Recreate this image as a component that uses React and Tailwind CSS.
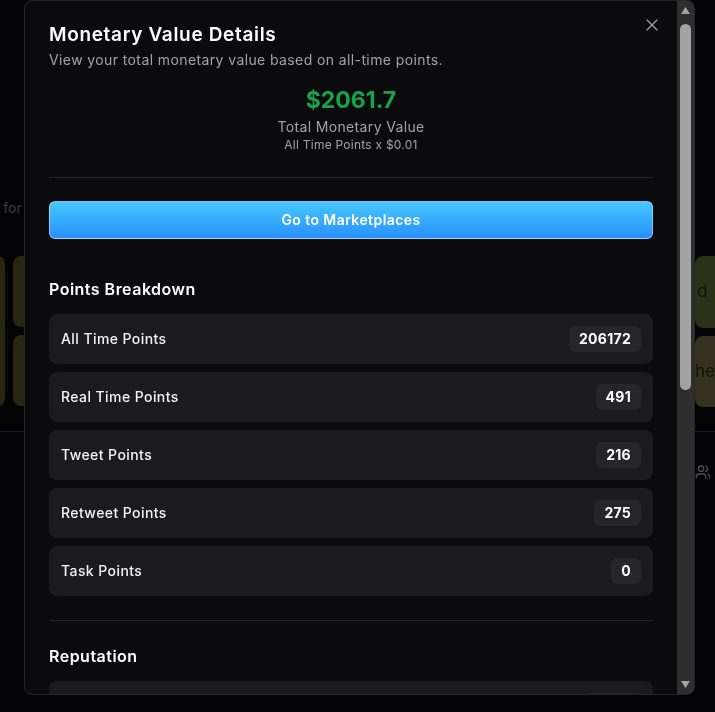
import React from "react";
import { X, Users } from "lucide-react";

const points = [
  { label: "All Time Points", value: "206172" },
  { label: "Real Time Points", value: "491" },
  { label: "Tweet Points", value: "216" },
  { label: "Retweet Points", value: "275" },
  { label: "Task Points", value: "0" },
];

const reputation = [
  { label: "Reputation Score", value: "1240" },
  { label: "Rank", value: "#812" },
];

const Row = ({ label, value }) => (
  <div className="flex h-[50px] items-center justify-between rounded-lg bg-[#1b1b1e] px-3">
    <span className="text-sm font-medium tracking-[0.03em] text-[#f4f4f5]">{label}</span>
    <span className="flex h-[26px] items-center rounded-md bg-[#262629] px-2.5 text-sm font-bold tracking-[0.02em] text-white">
      {value}
    </span>
  </div>
);

export default function App() {
  return (
    <div
      className="relative h-[712px] w-full overflow-hidden bg-[#030305]"
      style={{ fontFamily: "Inter, 'Noto Sans', sans-serif" }}
    >
      {/* page underneath the modal */}
      <div className="flex flex-col pt-[198px]">
        <div className="flex justify-between text-sm text-[#3a3d48]">
          <span className="-ml-2">s for</span>
          <span />
        </div>
        <div className="mt-[38px] flex justify-between">
          <div className="flex gap-2">
            <div className="-ml-3 h-[150px] w-[17px] rounded-r-lg bg-[#29260f]" />
            <div className="flex flex-col gap-2">
              <div className="h-[71px] w-3 rounded-l-lg bg-[#29260f]" />
              <div className="h-[71px] w-3 rounded-l-lg bg-[#29260f]" />
            </div>
          </div>
          <div className="flex w-[20px] flex-col gap-2">
            <div className="flex h-[72px] items-center overflow-hidden rounded-l-lg bg-[#2a3318] pl-0.5 text-[17px] text-[#11140a]">d</div>
            <div className="flex h-[71px] items-center overflow-hidden rounded-l-lg bg-[#373020] text-[17px] text-[#13110b]">he</div>
          </div>
        </div>
        <div className="mt-6 h-px bg-[#141a33]" />
        <div className="flex justify-end pr-1 pt-8 text-[#4a4d55]">
          <Users size={16} />
        </div>
      </div>

      {/* modal */}
      <div className="fixed left-[24px] top-0 flex h-[695px] w-[671px] overflow-hidden rounded-lg border border-[#26262a] bg-[#0b0b0d]">
        <div className="relative w-[652px] shrink-0 px-6 pt-5 pb-8">
          <button className="absolute right-[15px] top-[14px] text-[#a1a1aa]" aria-label="Close">
            <X size={20} strokeWidth={1.5} />
          </button>

          <h2 className="text-[19px] font-semibold leading-7 tracking-[0.035em] text-white">Monetary Value Details</h2>
          <p className="mt-px text-sm tracking-[0.028em] text-[#a1a1aa]">View your total monetary value based on all-time points.</p>

          <div className="mt-[14px] flex flex-col items-center">
            <div className="text-[23px] font-bold leading-8 text-[#16a34a]">$2061.7</div>
            <div className="mt-px text-sm tracking-[0.025em] text-[#a1a1aa]">Total Monetary Value</div>
            <div className="text-xs tracking-[0.02em] text-[#a1a1aa]">All Time Points x $0.01</div>
          </div>

          <div className="mt-6 h-px bg-[#27272a]" />

          <button className="mt-[23px] h-[38px] w-full rounded-md border border-white/40 bg-gradient-to-b from-[#47c7fe] to-[#2a8ffe] text-sm font-semibold tracking-[0.03em] text-white">
            Go to Marketplaces
          </button>

          <h3 className="mt-[38px] text-base font-semibold tracking-[0.03em] text-white">Points Breakdown</h3>
          <div className="mt-[13px] flex flex-col gap-2">
            {points.map((p) => (
              <Row key={p.label} {...p} />
            ))}
          </div>

          <div className="mt-6 h-px bg-[#27272a]" />

          <h3 className="mt-[23px] text-base font-semibold tracking-[0.03em] text-white">Reputation</h3>
          <div className="mt-[13px] flex flex-col gap-2">
            {reputation.map((p) => (
              <Row key={p.label} {...p} />
            ))}
          </div>
        </div>

        {/* scrollbar */}
        <div className="flex w-[17px] shrink-0 flex-col items-center bg-[#2e2e2e] py-[5px]">
          <svg width="11" height="9" viewBox="0 0 11 9" className="shrink-0">
            <path d="M5.5 1 L10 8 L1 8 Z" fill="#a3a3a3" />
          </svg>
          <div className="mt-[9px] h-[366px] w-[11px] rounded-full bg-[#a3a3a3]" />
          <div className="flex-1" />
          <svg width="11" height="9" viewBox="0 0 11 9" className="shrink-0">
            <path d="M1 1 L10 1 L5.5 8 Z" fill="#a3a3a3" />
          </svg>
        </div>
      </div>
    </div>
  );
}
